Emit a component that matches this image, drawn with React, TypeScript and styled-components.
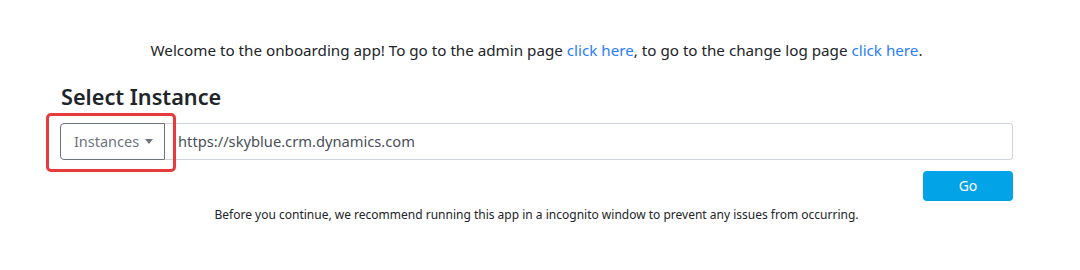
import React from "react";
import styled, { createGlobalStyle } from "styled-components";

const Global = createGlobalStyle`
  html, body { margin: 0; padding: 0; background: #fff; }
  body { font-family: "Segoe UI", "Noto Sans", "Open Sans", sans-serif; color: #212529; }
  * { box-sizing: border-box; }
`;

const Page = styled.div`
  width: 1080px;
  height: 270px;
  padding: 38px 67px 0 60px;
`;

const Welcome = styled.p`
  margin: 0;
  font-size: 15.2px;
  line-height: 24px;
  text-align: center;
`;

const Link = styled.a`
  color: #2a7ef6;
  text-decoration: none;
`;

const Heading = styled.h3`
  margin: 20px 0 0 1px;
  font-size: 21.7px;
  font-weight: 600;
  line-height: 30px;
`;

const Group = styled.div`
  position: relative;
  margin-top: 11px;
  display: flex;
  height: 37px;
`;

const Dropdown = styled.button`
  flex: none;
  width: 105px;
  height: 37px;
  border: 1px solid #6c757d;
  border-radius: 4px 0 0 4px;
  background: #fff;
  color: #6c757d;
  font-family: inherit;
  font-size: 14.5px;
  display: flex;
  align-items: center;
  justify-content: center;
  gap: 6px;
  padding: 0 0 2px 2px;
`;

const Caret = styled.span`
  width: 0;
  height: 0;
  border-left: 4.5px solid transparent;
  border-right: 4.5px solid transparent;
  border-top: 5px solid #6c757d;
  margin-top: 1px;
`;

const Input = styled.div`
  flex: 1;
  border: 1px solid #ced4da;
  border-left: none;
  border-radius: 0 4px 4px 0;
  font-size: 14.7px;
  color: #495057;
  display: flex;
  align-items: center;
  padding: 0 0 2px 13px;
`;

const Highlight = styled.div`
  position: absolute;
  left: -14px;
  top: -10px;
  width: 130px;
  height: 59px;
  border: 3px solid #e63a3f;
  border-radius: 5px;
  pointer-events: none;
`;

const Actions = styled.div`
  display: flex;
  justify-content: flex-end;
  margin-top: 11px;
`;

const Go = styled.button`
  width: 90px;
  height: 30px;
  border: none;
  border-radius: 4px;
  background: #03a3e8;
  color: #fff;
  font-family: inherit;
  font-size: 14px;
  padding: 0 0 1px;
`;

const Note = styled.p`
  margin: 5px 0 0;
  font-size: 12px;
  line-height: 18px;
  text-align: center;
`;

export default function App() {
  return (
    <>
      <Global />
      <Page>
        <Welcome>
          Welcome to the onboarding app! To go to the admin page <Link href="#">click here</Link>, to go to the change log page <Link href="#">click here</Link>.
        </Welcome>
        <Heading>Select Instance</Heading>
        <Group>
          <Dropdown>
            Instances <Caret />
          </Dropdown>
          <Input>https://skyblue.crm.dynamics.com</Input>
          <Highlight />
        </Group>
        <Actions>
          <Go>Go</Go>
        </Actions>
        <Note>
          Before you continue, we recommend running this app in a incognito window to prevent any issues from occurring.
        </Note>
      </Page>
    </>
  );
}
